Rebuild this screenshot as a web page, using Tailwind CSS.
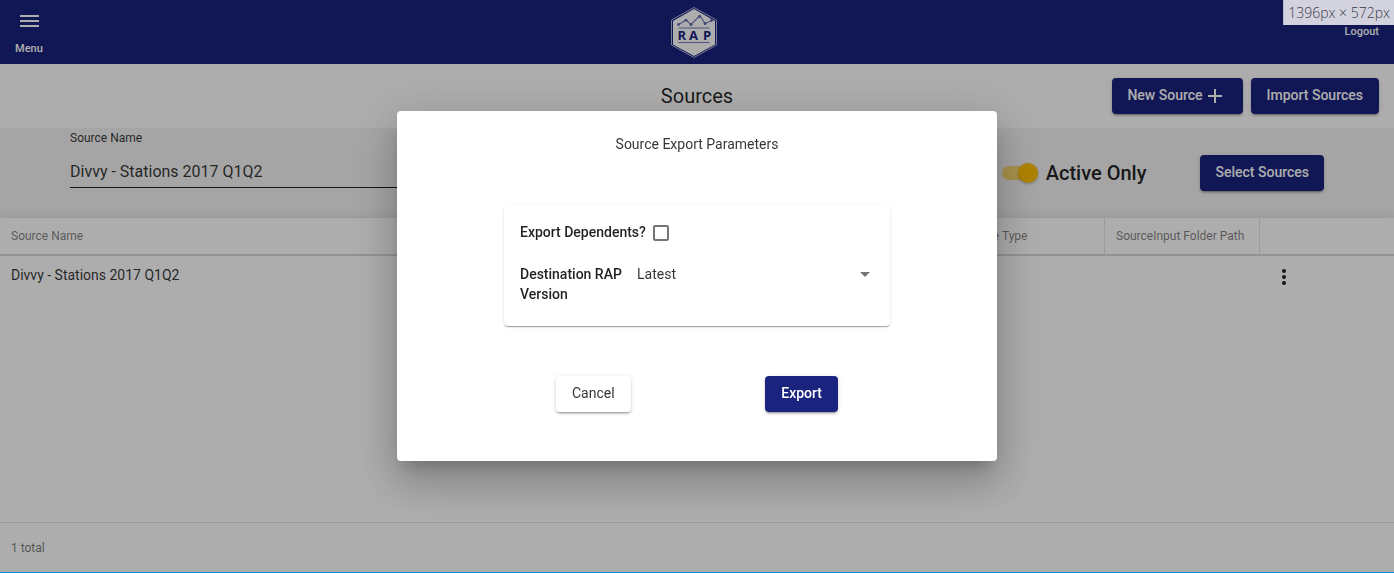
<!DOCTYPE html>
<html lang="en">
<head>
<meta charset="utf-8">
<title>Sources</title>
<script src="https://cdn.jsdelivr.net/npm/@tailwindcss/browser@4"></script>
</head>
<body class="h-screen overflow-hidden bg-white font-['Roboto',sans-serif] text-sm text-black/87">
<div class="flex h-full flex-col">
  <header class="grid h-16 shrink-0 grid-cols-3 items-center bg-[#1a237e] text-white">
    <button class="flex w-[58px] flex-col items-center gap-3.5 justify-self-start pt-2 text-[11px] leading-4 font-medium">
      <svg class="h-3 w-[19px]" viewBox="0 0 19 12" fill="currentColor" aria-hidden="true"><path d="M0 0h19v2H0zM0 5h19v2H0zM0 10h19v2H0z"/></svg>
      Menu
    </button>
    <svg class="mr-1.5 h-[54px] w-12 justify-self-center" viewBox="0 0 48 54" role="img" aria-label="RAP">
      <path d="M24 2.500 46.500 15v25L24 52.500 1.500 40V15Z" fill="#1a237e" stroke="#b4b8dc" stroke-width="1"/>
      <path d="M24 4 45 16v23.500L24 51 3 39.500V16Z" fill="#fff"/>
      <path d="M8 20 16 15l5 4.500 9-9 5 8 7-3" fill="none" stroke="#7379b6" stroke-width="1.100"/>
      <g fill="#6269ac"><circle cx="8.500" cy="19.500" r="1.400"/><circle cx="16" cy="15.300" r="1.400"/><circle cx="21" cy="19.500" r="1.500"/><circle cx="29.500" cy="11.500" r="1.500"/><circle cx="35" cy="18.500" r="1.500"/><circle cx="41.500" cy="15.500" r="1.400"/></g>
      <path d="M8.500 23h31M8.500 37.500h31" stroke="#7278b5" stroke-width="1.100"/>
      <text x="7.500 19 33" y="35" font-family="Open Sans, sans-serif" font-weight="700" font-size="13" fill="#1a237e">RAP</text>
    </svg>
    <a href="#" class="justify-self-end pr-[15px] text-[11px] leading-4 font-medium">Logout</a>
  </header>

  <div class="grid h-16 shrink-0 grid-cols-[1fr_auto_1fr] items-center">
    <h1 class="col-start-2 text-xl font-normal">Sources</h1>
    <div class="flex gap-2 justify-self-end pr-[15px]">
      <button class="flex h-9 items-center gap-1 rounded bg-[#1a237e] pr-5 pb-0.5 pl-[15px] font-medium text-white shadow-[0_3px_1px_-2px_rgba(0,0,0,.2),0_2px_2px_0_rgba(0,0,0,.14),0_1px_5px_0_rgba(0,0,0,.12)]">New Source
        <svg class="mt-0.5 size-4" viewBox="0 0 16 16" fill="currentColor" aria-hidden="true"><path d="M7 1h2v6h6v2H9v6H7V9H1V7h6z"/></svg>
      </button>
      <button class="h-9 rounded bg-[#1a237e] px-4 pb-0.5 font-medium text-white shadow-[0_3px_1px_-2px_rgba(0,0,0,.2),0_2px_2px_0_rgba(0,0,0,.14),0_1px_5px_0_rgba(0,0,0,.12)]">Import Sources</button>
    </div>
  </div>

  <div class="flex h-[90px] shrink-0 items-center bg-[#f4f4f4] px-[70px]">
    <div class="w-2/5">
      <label for="source-name" class="block text-xs leading-4 text-black/80">Source Name</label>
      <input id="source-name" type="text" value="Divvy - Stations 2017 Q1Q2" class="mt-2 mb-7 block h-[34px] w-full border-b border-black/87 pt-px text-base text-black/80 outline-none">
    </div>
    <label class="ml-auto flex items-center gap-2 text-xl font-medium">
      <span class="grid h-5 w-9 items-center">
        <input type="checkbox" role="switch" checked class="col-start-1 row-start-1 h-3.5 w-9 appearance-none rounded-full bg-[#ffc107]/54">
        <span class="col-start-1 row-start-1 size-5 justify-self-end rounded-full bg-[#ffc107] shadow-[0_1px_3px_rgba(0,0,0,.3)]"></span>
      </span>
      Active Only
    </label>
    <button class="ml-[54px] h-9 rounded bg-[#1a237e] px-[15px] pb-0.5 font-medium text-white shadow-[0_3px_1px_-2px_rgba(0,0,0,.2),0_2px_2px_0_rgba(0,0,0,.14),0_1px_5px_0_rgba(0,0,0,.12)]">Select Sources</button>
  </div>

  <main class="flex min-h-0 flex-1 flex-col bg-white shadow-[0_5px_5px_-3px_rgba(0,0,0,.2),0_8px_10px_1px_rgba(0,0,0,.14),0_3px_14px_2px_rgba(0,0,0,.12)]">
    <div class="min-h-0 flex-1">
      <table class="w-full table-fixed border-separate border-spacing-0 text-left">
        <colgroup><col><col class="w-[154px]"><col class="w-[155px]"><col class="w-[134px]"></colgroup>
        <thead class="text-xs text-black/50">
          <tr>
            <th class="h-[38px] border-b-2 border-black/15 pl-[11px] font-normal">Source Name</th>
            <th class="border-r border-b-2 border-r-black/10 border-b-black/15 pl-[11px] font-normal">Source Type</th>
            <th class="border-r border-b-2 border-r-black/10 border-b-black/15 pl-[11px] font-normal whitespace-nowrap">SourceInput Folder Path</th>
            <th class="border-b-2 border-black/15"></th>
          </tr>
        </thead>
        <tbody>
          <tr>
            <td class="h-[38px] pl-[11px] text-black/80">Divvy - Stations 2017 Q1Q2</td>
            <td></td>
            <td></td>
            <td class="pt-1 pl-3"><button aria-label="Row actions" class="block">
              <svg class="size-6" viewBox="0 0 24 24" fill="currentColor"><circle cx="12" cy="6" r="2"/><circle cx="12" cy="12" r="2"/><circle cx="12" cy="18" r="2"/></svg></button></td>
          </tr>
        </tbody>
      </table>
    </div>
    <footer class="flex h-[51px] shrink-0 items-center border-t border-black/12 pl-[11px] text-xs text-black/54">1 total</footer>
  </main>
</div>

<div class="fixed inset-0 flex items-center justify-center border-b border-[#1289e0] bg-black/32">
  <section role="dialog" aria-modal="true" aria-labelledby="dialog-title" class="flex w-[600px] max-w-full flex-col items-center rounded bg-white px-6 pt-[23px] pb-[49px] shadow-[0_11px_15px_-7px_rgba(0,0,0,.2),0_24px_38px_3px_rgba(0,0,0,.14),0_9px_46px_8px_rgba(0,0,0,.12)]">
    <h2 id="dialog-title" class="font-normal text-black/80">Source Export Parameters</h2>
    <div class="mt-[51px] w-[386px] max-w-full rounded px-4 pt-[17px] pb-[22px] shadow-[0_2px_1px_-1px_rgba(0,0,0,.2),0_1px_1px_0_rgba(0,0,0,.14),0_1px_3px_0_rgba(0,0,0,.12)]">
      <div class="flex items-center gap-[7px]">
        <label for="dependents" class="font-medium">Export Dependents?</label>
        <input id="dependents" type="checkbox" class="mt-0.5 size-4 appearance-none rounded-xs border-2 border-black/54">
      </div>
      <div class="mt-[22px] flex gap-3">
        <label for="version" class="w-[105px] font-medium">Destination RAP Version</label>
        <div class="grid h-5 flex-1 items-center">
          <select id="version" class="col-start-1 row-start-1 w-full appearance-none text-black/80 outline-none"><option>Latest</option></select>
          <svg class="pointer-events-none col-start-1 row-start-1 mr-1 h-[5px] w-2.5 justify-self-end text-black/54" viewBox="0 0 10 5" fill="currentColor" aria-hidden="true"><path d="M0 0h10L5 5z"/></svg>
        </div>
      </div>
    </div>
    <div class="mt-[50px] flex w-[282px] justify-between">
      <button class="h-9 rounded bg-white px-4 pb-0.5 text-black/80 shadow-[0_3px_1px_-2px_rgba(0,0,0,.2),0_2px_2px_0_rgba(0,0,0,.14),0_1px_5px_0_rgba(0,0,0,.12)]">Cancel</button>
      <button class="h-9 rounded bg-[#1a237e] px-4 pb-0.5 font-medium text-white shadow-[0_3px_1px_-2px_rgba(0,0,0,.2),0_2px_2px_0_rgba(0,0,0,.14),0_1px_5px_0_rgba(0,0,0,.12)]">Export</button>
    </div>
  </section>
</div>

<div class="fixed top-0 right-0 h-[25px] border-l border-[#b9b9c8] bg-[#d3d3e0] px-1 font-['Open_Sans',sans-serif] text-sm leading-[26px] font-light text-[#3c3c44]">1396px × 572px</div>
</body>
</html>
